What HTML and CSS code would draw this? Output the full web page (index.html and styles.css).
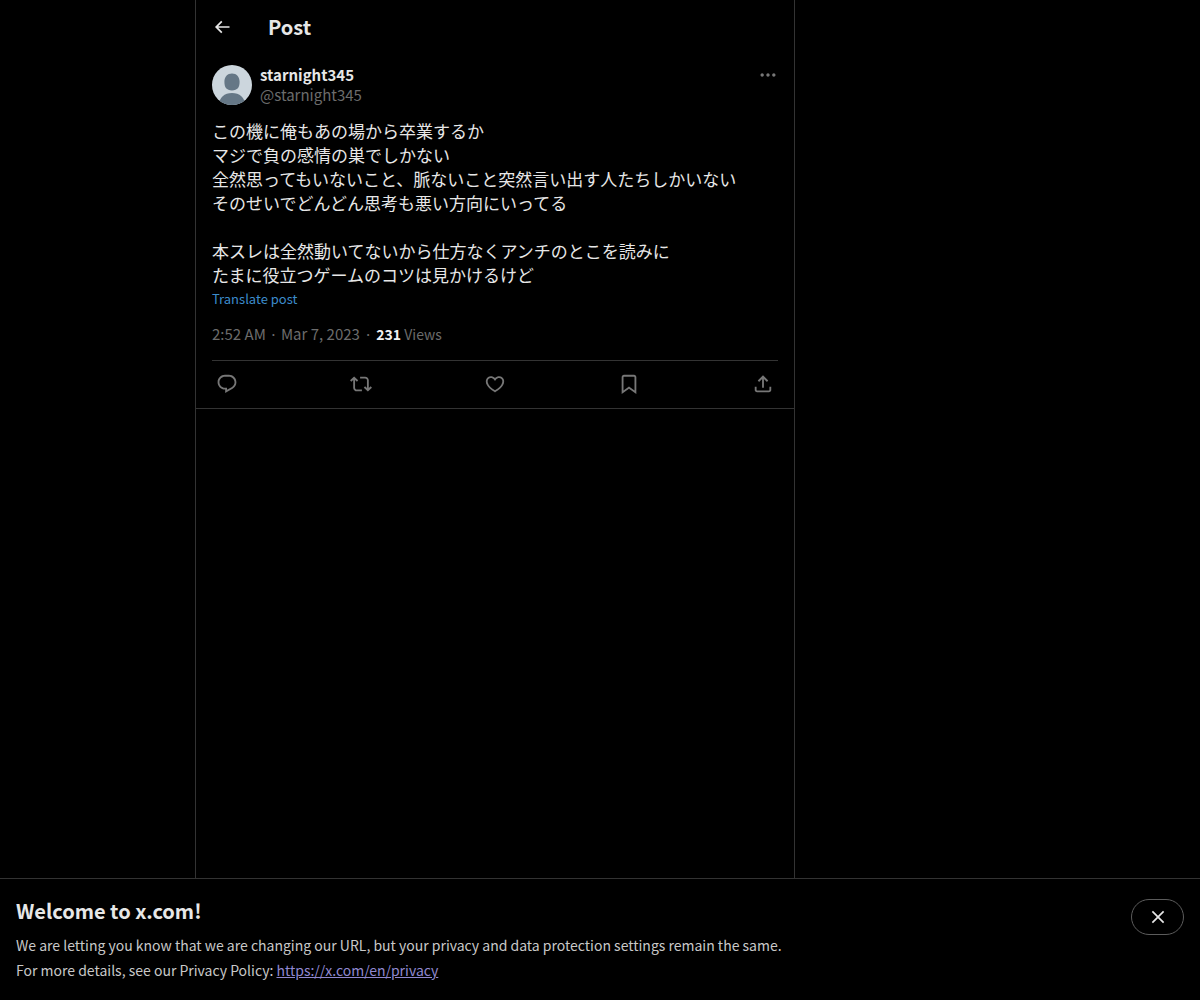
FILE: index.html
```html
<!DOCTYPE html>
<html lang="en">
<head>
<meta charset="utf-8">
<meta name="viewport" content="width=device-width, initial-scale=1">
<title>Post</title>
<link rel="stylesheet" href="styles.css">
</head>
<body>
<div class="layout">
  <main class="column">
    <header class="topbar">
      <button class="icon-button" type="button" aria-label="Back">
        <svg class="icon icon-small" viewBox="0 0 24 24" aria-hidden="true"><path d="M7.414 13l5.043 5.04-1.414 1.42L3.586 12l7.457-7.46 1.414 1.42L7.414 11H21v2H7.414z"/></svg>
      </button>
      <h1 class="title">Post</h1>
    </header>
    <article class="post">
      <div class="author">
        <svg class="avatar" viewBox="0 0 40 40" role="img" aria-label="starnight345">
          <defs><clipPath id="avatar-clip"><circle cx="20" cy="20" r="20"/></clipPath></defs>
          <g clip-path="url(#avatar-clip)">
            <rect width="40" height="40" fill="#ccd6dd"/>
            <path fill="#657786" d="M20 8.500c4.600 0 7.600 3.400 7.600 8.300 0 5.400-2 8.700-7.600 8.700s-7.600-3.300-7.600-8.700c0-4.900 3-8.300 7.600-8.300z"/>
            <path fill="#657786" d="M7 40c0-7.500 5.500-12 13-12s13 4.500 13 12z"/>
          </g>
        </svg>
        <div class="names">
          <a class="name" href="#">starnight345</a>
          <a class="handle" href="#">@starnight345</a>
        </div>
        <button class="icon-button more" type="button" aria-label="More">
          <svg class="icon icon-small" viewBox="0 0 24 24" aria-hidden="true"><path d="M3 12c0-1.100.9-2 2-2s2 .9 2 2-.9 2-2 2-2-.9-2-2zm9 2c1.100 0 2-.9 2-2s-.9-2-2-2-2 .9-2 2 .9 2 2 2zm7 0c1.100 0 2-.9 2-2s-.9-2-2-2-2 .9-2 2 .9 2 2 2z"/></svg>
        </button>
      </div>
      <p class="text" lang="ja">この機に俺もあの場から卒業するか
マジで負の感情の巣でしかない
全然思ってもいないこと、脈ないこと突然言い出す人たちしかいない
そのせいでどんどん思考も悪い方向にいってる

本スレは全然動いてないから仕方なくアンチのとこを読みに
たまに役立つゲームのコツは見かけるけど</p>
      <button class="translate" type="button">Translate post</button>
      <div class="meta">
        <a class="date" href="#">2:52 AM · Mar 7, 2023</a>
        <span>·</span>
        <span class="views"><strong class="count">231</strong> Views</span>
      </div>
      <div class="actions">
        <button class="action" type="button" aria-label="Reply"><svg class="icon" viewBox="0 0 24 24" aria-hidden="true"><path d="M1.751 10c0-4.420 3.584-8 8.005-8h4.366c4.490 0 8.129 3.640 8.129 8.130 0 2.960-1.607 5.680-4.196 7.110l-8.054 4.460v-3.690h-.067c-4.490.100-8.183-3.510-8.183-8.010zm8.005-6c-3.317 0-6.005 2.690-6.005 6 0 3.370 2.770 6.080 6.138 6.010l.351-.010h1.761v2.300l5.087-2.810c1.951-1.080 3.163-3.130 3.163-5.360 0-3.390-2.744-6.130-6.129-6.130H9.756z"/></svg></button>
        <button class="action" type="button" aria-label="Repost"><svg class="icon" viewBox="0 0 24 24" aria-hidden="true"><path d="M4.500 3.880l4.432 4.140-1.364 1.460L5.500 7.550V16c0 1.100.896 2 2 2H13v2H7.500c-2.209 0-4-1.790-4-4V7.550L1.432 9.480.068 8.020 4.500 3.880zM16.500 6H11V4h5.500c2.209 0 4 1.790 4 4v8.450l2.068-1.930 1.364 1.460-4.432 4.140-4.432-4.140 1.364-1.460 2.068 1.930V8c0-1.100-.896-2-2-2z"/></svg></button>
        <button class="action" type="button" aria-label="Like"><svg class="icon" viewBox="0 0 24 24" aria-hidden="true"><path d="M16.697 5.500c-1.222-.060-2.679.510-3.890 2.160l-.805 1.090-.806-1.090C9.984 6.010 8.526 5.440 7.304 5.500c-1.243.070-2.349.780-2.910 1.910-.552 1.120-.633 2.780.479 4.820 1.074 1.970 3.257 4.270 7.129 6.610 3.870-2.340 6.052-4.640 7.126-6.610 1.111-2.040 1.030-3.700.477-4.820-.561-1.130-1.666-1.840-2.908-1.910zm4.187 7.690c-1.351 2.480-4.001 5.120-8.379 7.670l-.503.300-.504-.300c-4.379-2.550-7.029-5.190-8.382-7.670-1.360-2.500-1.410-4.860-.514-6.670.887-1.790 2.647-2.910 4.601-3.010 1.651-.090 3.368.560 4.798 2.010 1.429-1.450 3.146-2.100 4.796-2.010 1.954.100 3.714 1.220 4.601 3.010.896 1.810.846 4.170-.514 6.670z"/></svg></button>
        <button class="action" type="button" aria-label="Bookmark"><svg class="icon" viewBox="0 0 24 24" aria-hidden="true"><path d="M4 4.500C4 3.120 5.119 2 6.500 2h11C18.881 2 20 3.120 20 4.500v18.440l-8-5.710-8 5.710V4.500zM6.500 4c-.276 0-.5.220-.5.500v14.560l6-4.290 6 4.290V4.500c0-.280-.224-.5-.5-.5h-11z"/></svg></button>
        <button class="action" type="button" aria-label="Share"><svg class="icon" viewBox="0 0 24 24" aria-hidden="true"><path d="M12 2.590l5.700 5.700-1.410 1.420L13 6.410V16h-2V6.410l-3.300 3.300-1.410-1.420L12 2.590zM21 15l-.020 3.510c0 1.380-1.120 2.490-2.500 2.490H5.500C4.110 21 3 19.880 3 18.500V15h2v3.500c0 .280.220.5.500.5h12.980c.280 0 .5-.220.5-.5L19 15h2z"/></svg></button>
      </div>
    </article>
  </main>
</div>
<aside class="notice" aria-labelledby="notice-title">
  <div class="notice-body">
    <h2 class="title" id="notice-title">Welcome to x.com!</h2>
    <p class="notice-text">We are letting you know that we are changing our URL, but your privacy and data protection settings remain the same.</p>
    <p class="notice-text">For more details, see our Privacy Policy: <a class="policy" href="https://x.com/en/privacy">https://x.com/en/privacy</a></p>
  </div>
  <button class="close" type="button" aria-label="Close">
    <svg class="icon icon-small" viewBox="0 0 24 24" aria-hidden="true"><path d="M10.590 12L4.540 5.960l1.420-1.420L12 10.590l6.040-6.050 1.420 1.420L13.410 12l6.050 6.040-1.420 1.420L12 13.410l-6.040 6.050-1.420-1.420L10.590 12z"/></svg>
  </button>
</aside>
</body>
</html>
```
FILE: styles.css
```css
* {
  box-sizing: border-box;
}

body {
  margin: 0;
  background: #000;
  color: #e7e7e7;
  font: 15px/20px "Noto Sans CJK JP", sans-serif;
}

h1, h2, p {
  margin: 0;
}

a {
  color: inherit;
  text-decoration: none;
}

button {
  margin: 0;
  padding: 0;
  border: 0;
  background: none;
  color: inherit;
  font: inherit;
  cursor: pointer;
}

.layout {
  display: grid;
  grid-template-columns: 13fr minmax(0, 600px) 27fr;
  min-height: 100vh;
}

.column {
  grid-column: 2;
  border: solid #333;
  border-width: 0 1px;
}

.icon {
  display: block;
  width: 22px;
  height: 22px;
  fill: currentColor;
}

.icon-small {
  width: 20px;
  height: 20px;
}

.topbar {
  display: flex;
  align-items: center;
  gap: 36px;
  height: 53px;
  padding: 0 16px;
}

.title {
  font-size: 20px;
  line-height: 24px;
  font-weight: 700;
}

.post {
  padding: 12px 16px 0;
  border-bottom: 1px solid #333;
}

.author {
  display: flex;
  align-items: flex-start;
  gap: 8px;
}

.avatar {
  width: 40px;
  height: 40px;
}

.names {
  display: flex;
  flex: 1;
  flex-direction: column;
}

.name {
  font-weight: 700;
}

.handle, .meta {
  color: #6c6c6c;
}

.more, .action {
  color: #777;
}

.text {
  margin-top: 14px;
  font-size: 17px;
  line-height: 24px;
  white-space: pre-wrap;
}

.translate {
  display: block;
  color: #3c8ccc;
  font-size: 13px;
  line-height: 24px;
}

.meta {
  display: flex;
  align-items: baseline;
  gap: 4px;
  padding: 13px 0 16px;
}

.views {
  font-size: 14px;
}

.count {
  color: #f2f2f2;
}

.actions {
  display: flex;
  justify-content: space-between;
  padding-bottom: 1px;
  border-top: 1px solid #333;
}

.action {
  display: grid;
  place-items: center;
  width: 30px;
  height: 46px;
}

.notice {
  position: fixed;
  inset: auto 0 0;
  display: flex;
  align-items: flex-start;
  justify-content: space-between;
  gap: 16px;
  padding: 20px 16px 17px;
  border-top: 1px solid #333;
  background: #000;
}

.notice-text {
  color: #c8c8c8;
  font-size: 14px;
  line-height: 25px;
}

.notice .title {
  margin-bottom: 10px;
}

.policy {
  color: #9088d0;
  text-decoration: underline;
}

.close {
  display: grid;
  place-items: center;
  width: 53px;
  height: 36px;
  border: 1px solid #5c5c5c;
  border-radius: 18px;
}
```
